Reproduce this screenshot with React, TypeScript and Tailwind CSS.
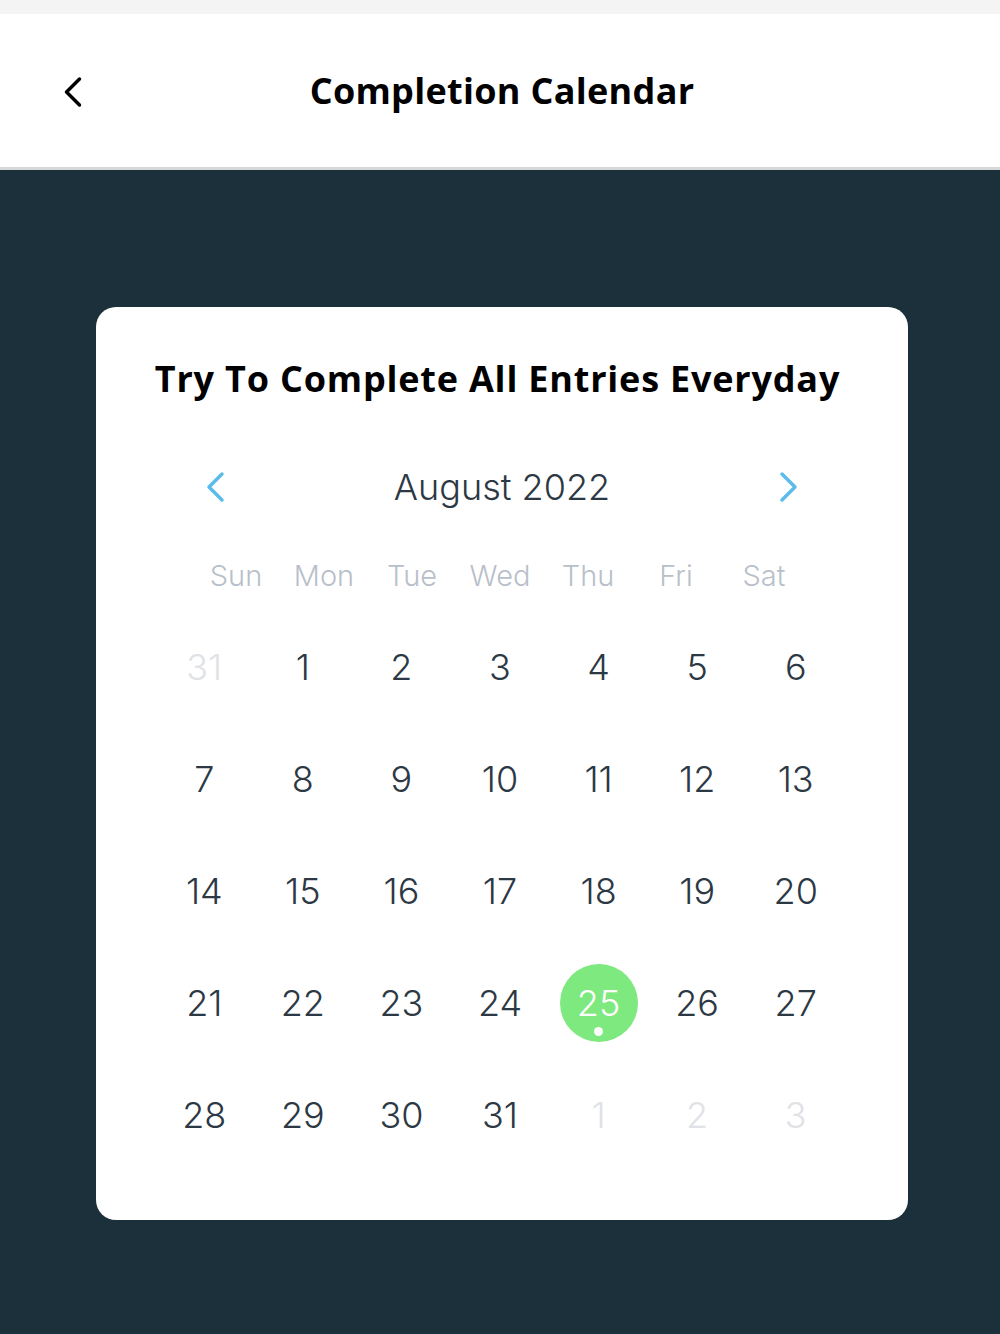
import React from "react";

const weekdays = ["Sun", "Mon", "Tue", "Wed", "Thu", "Fri", "Sat"];

type Day = { n: number; muted?: boolean; done?: boolean };

const weeks: Day[][] = [
  [{ n: 31, muted: true }, { n: 1 }, { n: 2 }, { n: 3 }, { n: 4 }, { n: 5 }, { n: 6 }],
  [{ n: 7 }, { n: 8 }, { n: 9 }, { n: 10 }, { n: 11 }, { n: 12 }, { n: 13 }],
  [{ n: 14 }, { n: 15 }, { n: 16 }, { n: 17 }, { n: 18 }, { n: 19 }, { n: 20 }],
  [{ n: 21 }, { n: 22 }, { n: 23 }, { n: 24 }, { n: 25, done: true }, { n: 26 }, { n: 27 }],
  [{ n: 28 }, { n: 29 }, { n: 30 }, { n: 31 }, { n: 1, muted: true }, { n: 2, muted: true }, { n: 3, muted: true }],
];

const Chevron = ({ dir, className }: { dir: "left" | "right"; className: string }) => (
  <svg viewBox="0 0 20 32" className={className} fill="none" stroke="currentColor" strokeLinecap="round" strokeLinejoin="round">
    {dir === "left" ? <path d="M17 3 L4 16 L17 29" /> : <path d="M3 3 L16 16 L3 29" />}
  </svg>
);

const App = () => {
  return (
    <div className="flex flex-col w-[1000px] h-[1334px] bg-[#1b303a]">
      <div className="h-[14px] bg-[#f4f4f4]" />
      <div className="relative flex items-center justify-center h-[156px] bg-white border-b-[3px] border-[#d4d6d8]">
        <Chevron dir="left" className="absolute left-[62px] top-[62px] w-[21px] h-[32px] text-black stroke-[3.5]" />
        <h1 className="font-['Open_Sans',sans-serif] font-bold text-[36px] text-black tracking-[0.3px] pl-[4px]">
          Completion Calendar
        </h1>
      </div>

      <div className="flex justify-center pt-[137px] pl-[4px]">
        <div className="flex flex-col items-center w-[812px] h-[913px] rounded-[20px] bg-white pt-[52px] font-['Inter',sans-serif]">
          <h2 className="h-[40px] leading-[40px] mr-[9px] font-['Open_Sans',sans-serif] font-bold text-[36px] text-black tracking-[0.8px]">
            Try To Complete All Entries Everyday
          </h2>

          <div className="flex items-center justify-between w-[690px] h-[48px] mt-[64px] px-[48px]">
            <Chevron dir="left" className="w-[20px] h-[32px] text-[#5bbcec] stroke-[3.5]" />
            <span className="text-[36px] font-light text-[#2c3844]">August 2022</span>
            <Chevron dir="right" className="w-[20px] h-[32px] text-[#5bbcec] stroke-[3.5]" />
          </div>

          <div className="grid grid-cols-7 w-[616px] h-[40px] mt-[43px] -ml-[4px]">
            {weekdays.map((d) => (
              <div key={d} className="flex items-center justify-center text-[29px] font-light text-[#b8bfca]">
                {d}
              </div>
            ))}
          </div>

          <div className="flex flex-col w-[690px] mt-[17px] mr-[4px]">
            {weeks.map((week, i) => (
              <div key={i} className="grid grid-cols-7 h-[112px]">
                {week.map((day, j) => (
                  <div key={j} className="flex items-center justify-center">
                    {day.done ? (
                      <div className="relative flex items-center justify-center w-[78px] h-[78px] rounded-full bg-[#7de97f]">
                        <span className="text-[36px] font-light text-white">{day.n}</span>
                        <span className="absolute bottom-[6px] w-[9px] h-[9px] rounded-full bg-white" />
                      </div>
                    ) : (
                      <span className={`text-[36px] font-light ${day.muted ? "text-[#dfe2e6]" : "text-[#2c3844]"}`}>
                        {day.n}
                      </span>
                    )}
                  </div>
                ))}
              </div>
            ))}
          </div>
        </div>
      </div>
    </div>
  );
};

export default App;
